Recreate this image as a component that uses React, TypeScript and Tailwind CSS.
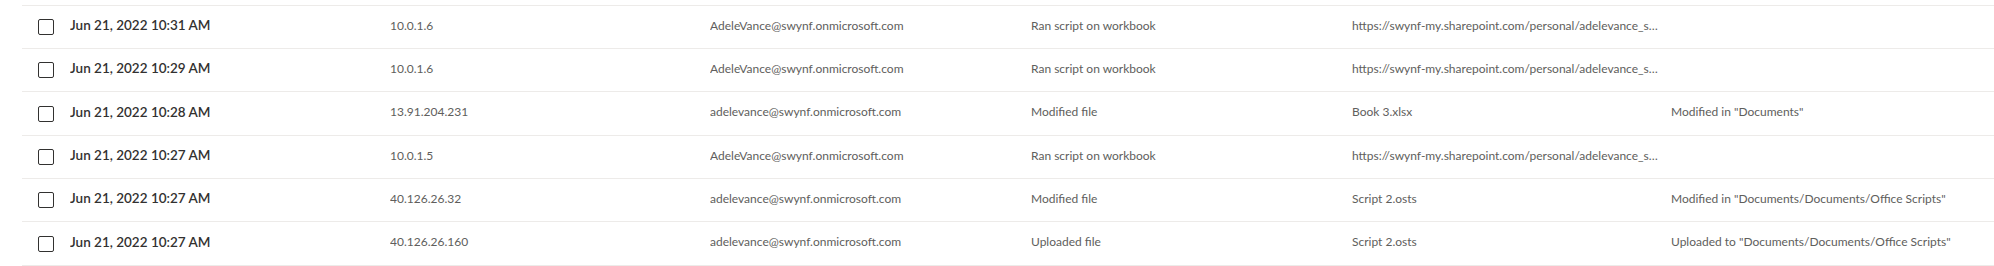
const ROWS = [
  {
    date: "Jun 21, 2022 10:31 AM",
    ip: "10.0.1.6",
    user: "AdeleVance@swynf.onmicrosoft.com",
    activity: "Ran script on workbook",
    item: "https://swynf-my.sharepoint.com/personal/adelevance_swynf_onmicrosoft_com/Documents/Book.xlsx",
    details: "",
    h: "h-[43px]",
  },
  {
    date: "Jun 21, 2022 10:29 AM",
    ip: "10.0.1.6",
    user: "AdeleVance@swynf.onmicrosoft.com",
    activity: "Ran script on workbook",
    item: "https://swynf-my.sharepoint.com/personal/adelevance_swynf_onmicrosoft_com/Documents/Book.xlsx",
    details: "",
    h: "h-[43px]",
  },
  {
    date: "Jun 21, 2022 10:28 AM",
    ip: "13.91.204.231",
    user: "adelevance@swynf.onmicrosoft.com",
    activity: "Modified file",
    item: "Book 3.xlsx",
    details: 'Modified in "Documents"',
    h: "h-[44px]",
  },
  {
    date: "Jun 21, 2022 10:27 AM",
    ip: "10.0.1.5",
    user: "AdeleVance@swynf.onmicrosoft.com",
    activity: "Ran script on workbook",
    item: "https://swynf-my.sharepoint.com/personal/adelevance_swynf_onmicrosoft_com/Documents/Book%203.xlsx",
    details: "",
    h: "h-[43px]",
  },
  {
    date: "Jun 21, 2022 10:27 AM",
    ip: "40.126.26.32",
    user: "adelevance@swynf.onmicrosoft.com",
    activity: "Modified file",
    item: "Script 2.osts",
    details: 'Modified in "Documents/Documents/Office Scripts"',
    h: "h-[43px]",
  },
  {
    date: "Jun 21, 2022 10:27 AM",
    ip: "40.126.26.160",
    user: "adelevance@swynf.onmicrosoft.com",
    activity: "Uploaded file",
    item: "Script 2.osts",
    details: 'Uploaded to "Documents/Documents/Office Scripts"',
    h: "h-[44px]",
  },
];

export default function App() {
  return (
    <div className="w-[1994px] h-[266px] bg-white overflow-hidden font-['Segoe_UI','Lato','Liberation_Sans',sans-serif]">
      <div className="mt-[5px] ml-[22px] border-t border-[#edebe9]">
        {ROWS.map((row, i) => (
          <div
            key={i}
            className={`${row.h} flex items-center border-b border-[#edebe9]`}
          >
            <div className="w-[48px] flex items-center pl-[16px]">
              <div className="w-[16px] h-[16px] rounded-[2px] border border-[#323130]" />
            </div>
            <div className="grid grid-cols-[320px_320px_321px_321px_319px_300px] items-center pb-[3px]">
              <div className="text-[13.5px] font-semibold text-[#323130] truncate pr-3">
                {row.date}
              </div>
              <div className="text-[12px] text-[#605e5c] truncate pr-3">{row.ip}</div>
              <div className="text-[12px] text-[#605e5c] truncate pr-3">{row.user}</div>
              <div className="text-[12px] text-[#605e5c] truncate pr-3">{row.activity}</div>
              <div className="text-[12px] text-[#605e5c] truncate pr-3">{row.item}</div>
              <div className="text-[12px] text-[#605e5c] truncate pr-3">{row.details}</div>
            </div>
          </div>
        ))}
      </div>
    </div>
  );
}
